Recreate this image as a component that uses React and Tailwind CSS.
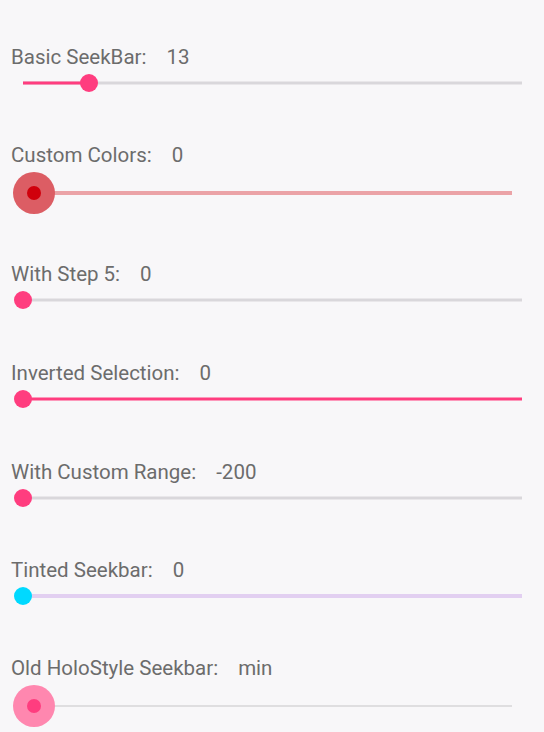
const PINK = 'bg-[#ff3d7f]';

const SeekBar = ({ pos, trackClass, fillClass, thumb }) => {
    return (
        <div className="relative h-full">
            <div className={`absolute left-0 right-0 top-1/2 -translate-y-1/2 ${trackClass}`} />
            {fillClass && (
                <div
                    className={`absolute left-0 top-1/2 -translate-y-1/2 ${fillClass}`}
                    style={{ width: `${pos}%` }}
                />
            )}
            <div
                className="absolute top-1/2 -translate-x-1/2 -translate-y-1/2"
                style={{ left: `${pos}%` }}
            >
                {thumb}
            </div>
        </div>
    );
};

const SmallThumb = ({ color }) => (
    <div className={`w-[18px] h-[18px] rounded-full ${color}`} />
);

const BigThumb = ({ halo, dot }) => (
    <div className={`w-[42px] h-[42px] rounded-full flex items-center justify-center ${halo}`}>
        <div className={`w-[14px] h-[14px] rounded-full ${dot}`} />
    </div>
);

const Section = ({ label, value, className, rowClass, children }) => (
    <div className={className}>
        <div className="flex items-center h-[24px] pl-[11px] text-[20.5px] text-[#6c6c6c]">
            <span>{label}</span>
            <span className="ml-[20px]">{value}</span>
        </div>
        <div className={`mt-[5px] ${rowClass}`}>{children}</div>
    </div>
);

export default function App() {
    return (
        <div
            className="w-[544px] min-h-[732px] bg-[#f8f7f9] flex flex-col pt-[45px]"
            style={{ fontFamily: 'Roboto, "Noto Sans", sans-serif' }}
        >
            {/* Basic */}
            <Section label="Basic SeekBar:" value="13" rowClass="h-[18px] ml-[23px] mr-[22px]">
                <SeekBar
                    pos={13.2}
                    trackClass="h-[3px] bg-[#d9d7db]"
                    fillClass={`h-[3px] ${PINK}`}
                    thumb={<SmallThumb color={PINK} />}
                />
            </Section>

            {/* Custom colors */}
            <Section label="Custom Colors:" value="0" className="mt-[51px]" rowClass="h-[42px] ml-[34px] mr-[32px]">
                <SeekBar
                    pos={0}
                    trackClass="h-[4px] bg-[#eba3a7]"
                    thumb={<BigThumb halo="bg-[#dc5d64]" dot="bg-[#d0000c]" />}
                />
            </Section>

            {/* Step */}
            <Section label="With Step 5:" value="0" className="mt-[48px]" rowClass="h-[18px] ml-[23px] mr-[22px]">
                <SeekBar
                    pos={0}
                    trackClass="h-[3px] bg-[#d9d7db]"
                    thumb={<SmallThumb color={PINK} />}
                />
            </Section>

            {/* Inverted */}
            <Section label="Inverted Selection:" value="0" className="mt-[52px]" rowClass="h-[18px] ml-[23px] mr-[22px]">
                <SeekBar
                    pos={0}
                    trackClass={`h-[3px] ${PINK}`}
                    thumb={<SmallThumb color={PINK} />}
                />
            </Section>

            {/* Custom range */}
            <Section label="With Custom Range:" value="-200" className="mt-[52px]" rowClass="h-[18px] ml-[23px] mr-[22px]">
                <SeekBar
                    pos={0}
                    trackClass="h-[3px] bg-[#d9d7db]"
                    thumb={<SmallThumb color={PINK} />}
                />
            </Section>

            {/* Tinted */}
            <Section label="Tinted Seekbar:" value="0" className="mt-[51px]" rowClass="h-[18px] ml-[23px] mr-[22px]">
                <SeekBar
                    pos={0}
                    trackClass="h-[4px] bg-[#e2cff1]"
                    thumb={<SmallThumb color="bg-[#00d9ff]" />}
                />
            </Section>

            {/* Holo */}
            <Section label="Old HoloStyle Seekbar:" value="min" className="mt-[51px]" rowClass="h-[42px] ml-[34px] mr-[32px]">
                <SeekBar
                    pos={0}
                    trackClass="h-[1px] bg-[#c6c5c8]"
                    thumb={<BigThumb halo="bg-[#ff87af]" dot="bg-[#ff3d7f]" />}
                />
            </Section>
        </div>
    );
}
